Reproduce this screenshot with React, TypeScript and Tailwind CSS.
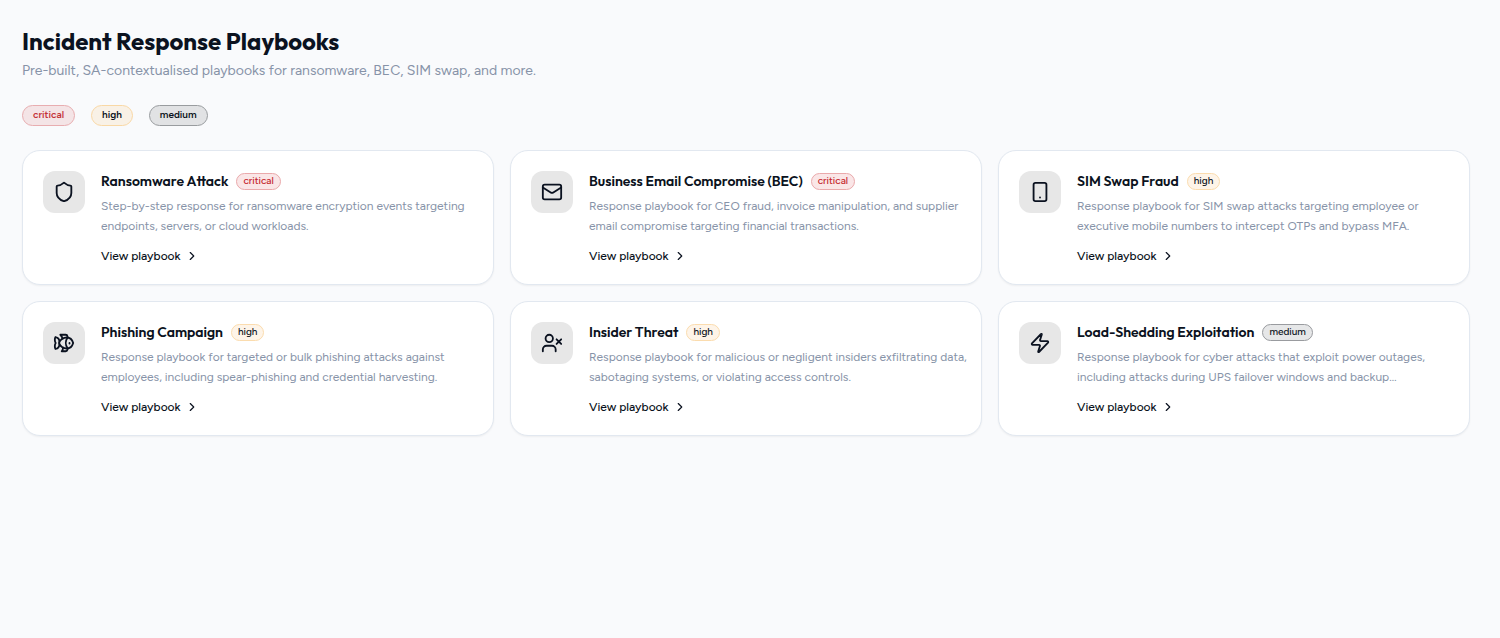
import clsx from "clsx";
import {
  ChevronRight,
  Fish,
  Mail,
  Shield,
  Smartphone,
  UserX,
  Zap,
  type LucideIcon,
} from "lucide-react";

type Severity = "critical" | "high" | "medium";

interface Playbook {
  id: string;
  title: string;
  severity: Severity;
  description: string;
  icon: LucideIcon;
}

const SEVERITIES: Severity[] = ["critical", "high", "medium"];

const filterStyles: Record<Severity, string> = {
  critical: "border-[#e8adb0] bg-[#f4e4e6] text-[#c4343a]",
  high: "border-[#f9d8a5] bg-[#f9f1e6] text-[#0b1220]",
  medium: "border-[#999c9f] bg-[#e1e2e4] text-[#0b1220]",
};

const badgeStyles: Record<Severity, string> = {
  critical: "border-[#eaa9ab] bg-[#fae6e7] text-[#c4242b]",
  high: "border-[#fbdcae] bg-[#fef4e8] text-[#0b1220]",
  medium: "border-[#999b9f] bg-[#e6e7e8] text-[#0b1220]",
};

const playbooks: Playbook[] = [
  {
    id: "ransomware",
    title: "Ransomware Attack",
    severity: "critical",
    description:
      "Step-by-step response for ransomware encryption events targeting endpoints, servers, or cloud workloads.",
    icon: Shield,
  },
  {
    id: "bec",
    title: "Business Email Compromise (BEC)",
    severity: "critical",
    description:
      "Response playbook for CEO fraud, invoice manipulation, and supplier email compromise targeting financial transactions.",
    icon: Mail,
  },
  {
    id: "sim-swap",
    title: "SIM Swap Fraud",
    severity: "high",
    description:
      "Response playbook for SIM swap attacks targeting employee or executive mobile numbers to intercept OTPs and bypass MFA.",
    icon: Smartphone,
  },
  {
    id: "phishing",
    title: "Phishing Campaign",
    severity: "high",
    description:
      "Response playbook for targeted or bulk phishing attacks against employees, including spear-phishing and credential harvesting.",
    icon: Fish,
  },
  {
    id: "insider",
    title: "Insider Threat",
    severity: "high",
    description:
      "Response playbook for malicious or negligent insiders exfiltrating data, sabotaging systems, or violating access controls.",
    icon: UserX,
  },
  {
    id: "load-shedding",
    title: "Load-Shedding Exploitation",
    severity: "medium",
    description:
      "Response playbook for cyber attacks that exploit power outages, including attacks during UPS failover windows and backup…",
    icon: Zap,
  },
];

function PlaybookCard({ playbook }: { playbook: Playbook }) {
  const Icon = playbook.icon;

  return (
    <article className="flex items-start gap-4 rounded-[18px] border border-[#e2e8f0] bg-white py-5 pr-3 pl-5 shadow-xs">
      <div className="flex size-[42px] shrink-0 items-center justify-center rounded-xl bg-[#e7e7e7] text-[#0b1220]">
        <Icon size={22} strokeWidth={2} />
      </div>
      <div className="min-w-0 flex-1">
        <div className="flex items-center gap-2">
          <h2 className="font-['Outfit','Lato',sans-serif] text-[14px] leading-5 font-semibold text-[#0b1220]">
            {playbook.title}
          </h2>
          <span
            className={clsx(
              "rounded-full border px-1.5 pb-px text-[10px] leading-[14px] font-medium",
              badgeStyles[playbook.severity]
            )}
          >
            {playbook.severity}
          </span>
        </div>
        <p className="mt-[5px] line-clamp-2 text-[12px] leading-5 text-[#8793a8]">
          {playbook.description}
        </p>
        <a
          href={`#${playbook.id}`}
          className="mt-3 flex items-center gap-1 text-[12px] leading-4 font-medium text-[#0b1220]"
        >
          View playbook
          <ChevronRight size={14} />
        </a>
      </div>
    </article>
  );
}

export default function App() {
  return (
    <main className="min-h-screen bg-[#f9fafc] pt-7 pr-[30px] pb-7 pl-[22px] font-['Figtree','Inter',sans-serif]">
      <header>
        <h1 className="font-['Outfit','Lato',sans-serif] text-[24px] leading-[26px] font-bold text-[#0b1220]">
          Incident Response Playbooks
        </h1>
        <p className="mt-[7px] text-[14px] leading-5 text-[#8793a8]">
          Pre-built, SA-contextualised playbooks for ransomware, BEC, SIM swap, and more.
        </p>
      </header>

      <div className="mt-6 flex gap-4">
        {SEVERITIES.map((severity) => (
          <button
            key={severity}
            type="button"
            className={clsx(
              "rounded-full border px-2.5 pb-px text-[10px] leading-[18px] font-semibold",
              filterStyles[severity]
            )}
          >
            {severity}
          </button>
        ))}
      </div>

      <div className="mt-6 grid grid-cols-1 gap-4 md:grid-cols-2 lg:grid-cols-3">
        {playbooks.map((playbook) => (
          <PlaybookCard key={playbook.id} playbook={playbook} />
        ))}
      </div>
    </main>
  );
}
